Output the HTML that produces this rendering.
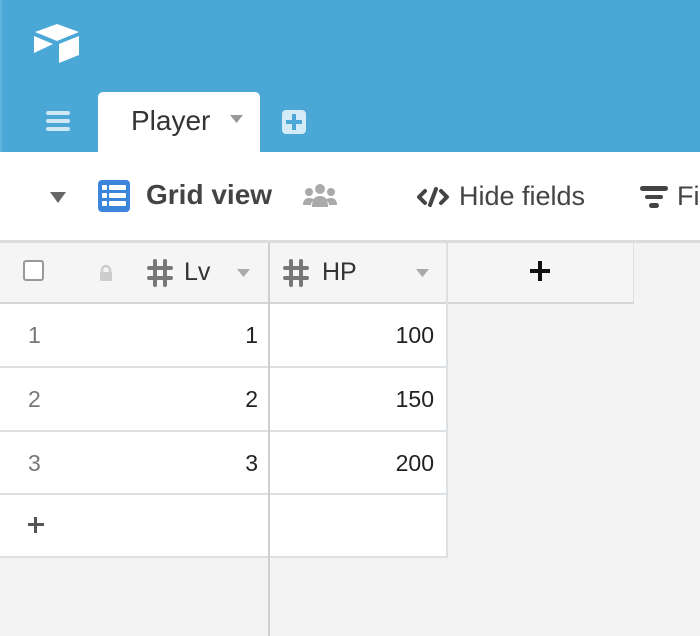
<!DOCTYPE html>
<html><head><meta charset="utf-8"><style>
*{margin:0;padding:0;box-sizing:border-box}
body{width:700px;height:636px;overflow:hidden;background:#f3f3f3;font-family:"Liberation Sans",sans-serif;position:relative}
.a{position:absolute}
</style></head><body>
<div class="a" style="left:0;top:0;width:700px;height:152px;background:#4aa7d6"></div>
<div class="a" style="left:0;top:0;width:2px;height:152px;background:#5fb3dd"></div>
<svg class="a" style="left:30px;top:22px" width="54" height="44" viewBox="30 22 54 44">
<path d="M57 24 L79 32 L57 41 L35 32 Z" fill="#fff"/>
<path d="M34 36 L53 44 L34 53 Z" fill="#fff"/>
<path d="M59 44 L79 36 L79 55 L59 63 Z" fill="#fff"/>
</svg>
<div class="a" style="left:46px;top:111px;width:24px;height:4px;border-radius:2px;background:#cde7f4"></div>
<div class="a" style="left:46px;top:119px;width:24px;height:4px;border-radius:2px;background:#cde7f4"></div>
<div class="a" style="left:46px;top:127px;width:24px;height:4px;border-radius:2px;background:#cde7f4"></div>
<div class="a" style="left:98px;top:92px;width:162px;height:62px;background:#fff;border-radius:5px 5px 0 0"></div>
<div class="a" style="left:131px;top:105px;font-size:28px;color:#333">Player</div>
<svg class="a" style="left:230px;top:115px" width="13" height="9"><path d="M0 0H13L6.5 8Z" fill="#999"/></svg>
<div class="a" style="left:282px;top:110px;width:24px;height:24px;border-radius:4px;background:#d4ecf7"></div>
<div class="a" style="left:286px;top:120px;width:16px;height:4px;background:#4aa7d6"></div>
<div class="a" style="left:292px;top:114px;width:4px;height:16px;background:#4aa7d6"></div>
<div class="a" style="left:0;top:152px;width:700px;height:88px;background:#fff"></div>
<svg class="a" style="left:50px;top:192px" width="16" height="12"><path d="M0 0H16L8 11Z" fill="#666"/></svg>
<svg class="a" style="left:98px;top:180px" width="32" height="32" viewBox="0 0 32 32"><rect x="0" y="0" width="32" height="32" rx="4" fill="#3b86db"/>
<g fill="#fff"><rect x="4" y="5" width="5" height="5" rx="1"/><rect x="11" y="5" width="17" height="5" rx="1"/><rect x="4" y="13" width="5" height="5" rx="1"/><rect x="11" y="13" width="17" height="5" rx="1"/><rect x="4" y="21" width="5" height="5" rx="1"/><rect x="11" y="21" width="17" height="5" rx="1"/></g></svg>
<div class="a" style="left:146px;top:179px;font-size:28px;font-weight:bold;color:#444">Grid view</div>
<svg class="a" style="left:303px;top:183px" width="34" height="27" viewBox="0 0 34 27"><g fill="#aaa"><circle cx="17" cy="6" r="5"/><circle cx="6" cy="9" r="4"/><circle cx="28" cy="9" r="4"/><path d="M9 24 Q9 13 17 13 Q25 13 25 24Z"/><path d="M0 22 Q0 15 6 15 Q10 15 11 17 Q8 19 8 22Z"/><path d="M34 22 Q34 15 28 15 Q24 15 23 17 Q26 19 26 22Z"/></g></svg>
<svg class="a" style="left:416px;top:186px" width="34" height="22" viewBox="0 0 34 22"><g fill="none" stroke="#444" stroke-width="4" stroke-linecap="round" stroke-linejoin="round"><path d="M9 5 L3 11 L9 17"/><path d="M25 5 L31 11 L25 17"/><path d="M20 3 L14 19"/></g></svg>
<div class="a" style="left:459px;top:181px;font-size:27px;color:#444">Hide fields</div>
<svg class="a" style="left:640px;top:186px" width="28" height="24"><g fill="#444"><rect x="0" y="0" width="28" height="5" rx="2.5"/><rect x="5" y="9" width="18" height="4" rx="2"/><rect x="9" y="17" width="10" height="5" rx="2.5"/></g></svg>
<div class="a" style="left:677px;top:181px;font-size:27px;color:#444">Fi</div>
<div class="a" style="left:0;top:240px;width:700px;height:3px;background:#dcdcdc"></div>
<div class="a" style="left:0;top:243px;width:633px;height:59px;background:#f5f5f5"></div>
<div class="a" style="left:633px;top:243px;width:1px;height:59px;background:#dde0e3"></div>
<div class="a" style="left:0;top:302px;width:634px;height:2px;background:#d5d5d5"></div>
<div class="a" style="left:23px;top:260px;width:21px;height:21px;border:2px solid #999;border-radius:3px;background:#fff"></div>
<svg class="a" style="left:98px;top:264px" width="16" height="18"><path d="M4 8V6a4 4 0 0 1 8 0v2" fill="none" stroke="#ccc" stroke-width="2.5"/><rect x="2" y="8" width="12" height="9" rx="1.5" fill="#ccc"/></svg>
<svg class="a" style="left:146px;top:258px" width="28" height="30" viewBox="0 0 28 30"><g stroke="#777" stroke-width="4" stroke-linecap="round"><path d="M9 3V27M19 3V27M3 10H25M3 20H25"/></g></svg>
<div class="a" style="left:184px;top:258px;font-size:25px;color:#333">Lv</div>
<svg class="a" style="left:237px;top:269px" width="13" height="9"><path d="M0 0H13L6.5 8Z" fill="#aaa"/></svg>
<svg class="a" style="left:282px;top:258px" width="28" height="30" viewBox="0 0 28 30"><g stroke="#777" stroke-width="4" stroke-linecap="round"><path d="M9 3V27M19 3V27M3 10H25M3 20H25"/></g></svg>
<div class="a" style="left:322px;top:258px;font-size:25px;color:#333">HP</div>
<svg class="a" style="left:416px;top:269px" width="13" height="9"><path d="M0 0H13L6.5 8Z" fill="#aaa"/></svg>
<div class="a" style="left:530px;top:269px;width:20px;height:4px;background:#111"></div>
<div class="a" style="left:538px;top:261px;width:4px;height:20px;background:#111"></div>
<div class="a" style="left:0;top:304px;width:447px;height:253px;background:#fff"></div>
<div class="a" style="left:0;top:366px;width:447px;height:2px;background:#dde0e3"></div>
<div class="a" style="left:0;top:430px;width:447px;height:2px;background:#dde0e3"></div>
<div class="a" style="left:0;top:493px;width:447px;height:2px;background:#dde0e3"></div>
<div class="a" style="left:0;top:556px;width:447px;height:2px;background:#dde0e3"></div>
<div class="a" style="left:446px;top:243px;width:2px;height:315px;background:#dde0e3"></div>
<div class="a" style="left:268px;top:243px;width:2px;height:393px;background:#cfcfcf"></div>
<div class="a" style="left:28px;top:322px;font-size:23px;color:#777">1</div>
<div class="a" style="left:28px;top:386px;font-size:23px;color:#777">2</div>
<div class="a" style="left:28px;top:450px;font-size:23px;color:#777">3</div>
<div class="a" style="left:0;top:322px;width:258px;text-align:right;font-size:23px;color:#222">1</div>
<div class="a" style="left:0;top:386px;width:258px;text-align:right;font-size:23px;color:#222">2</div>
<div class="a" style="left:0;top:450px;width:258px;text-align:right;font-size:23px;color:#222">3</div>
<div class="a" style="left:270px;top:322px;width:164px;text-align:right;font-size:23px;color:#222">100</div>
<div class="a" style="left:270px;top:386px;width:164px;text-align:right;font-size:23px;color:#222">150</div>
<div class="a" style="left:270px;top:450px;width:164px;text-align:right;font-size:23px;color:#222">200</div>
<div class="a" style="left:28px;top:523px;width:16px;height:3px;background:#555"></div>
<div class="a" style="left:34px;top:517px;width:3px;height:16px;background:#555"></div>
</body></html>
